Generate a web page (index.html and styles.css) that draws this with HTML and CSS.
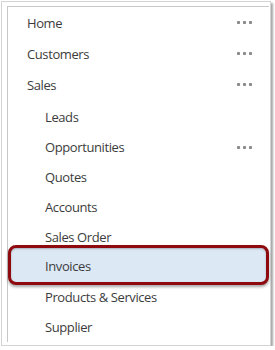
FILE: index.html
```html
<!DOCTYPE html>
<html lang="en">
<head>
    <meta charset="UTF-8">
    <meta name="viewport" content="width=device-width, initial-scale=1.0">
    <title>Site Map</title>
    <link rel="stylesheet" href="styles.css">
</head>
<body>
    <div class="frame">
        <nav class="nav">
            <div class="row">
                <span>Home</span>
                <svg class="more" width="15" height="3" viewBox="0 0 15 3"><rect x="0" y="0" width="3" height="3" rx="0.8"/><rect x="6" y="0" width="3" height="3" rx="0.8"/><rect x="12" y="0" width="3" height="3" rx="0.8"/></svg>
            </div>
            <div class="row">
                <span>Customers</span>
                <svg class="more" width="15" height="3" viewBox="0 0 15 3"><rect x="0" y="0" width="3" height="3" rx="0.8"/><rect x="6" y="0" width="3" height="3" rx="0.8"/><rect x="12" y="0" width="3" height="3" rx="0.8"/></svg>
            </div>
            <div class="row">
                <span>Sales</span>
                <svg class="more" width="15" height="3" viewBox="0 0 15 3"><rect x="0" y="0" width="3" height="3" rx="0.8"/><rect x="6" y="0" width="3" height="3" rx="0.8"/><rect x="12" y="0" width="3" height="3" rx="0.8"/></svg>
            </div>
            <div class="sub">
                <div class="row sub-row"><span>Leads</span></div>
                <div class="row sub-row">
                    <span>Opportunities</span>
                    <svg class="more" width="15" height="3" viewBox="0 0 15 3"><rect x="0" y="0" width="3" height="3" rx="0.8"/><rect x="6" y="0" width="3" height="3" rx="0.8"/><rect x="12" y="0" width="3" height="3" rx="0.8"/></svg>
                </div>
                <div class="row sub-row"><span>Quotes</span></div>
                <div class="row sub-row"><span>Accounts</span></div>
                <div class="row sub-row"><span>Sales Order</span></div>
                <div class="row sub-row selected"><span>Invoices</span></div>
                <div class="row sub-row"><span>Products &amp; Services</span></div>
                <div class="row sub-row"><span>Supplier</span></div>
            </div>
        </nav>
    </div>
</body>
</html>
```

FILE: styles.css
```css
body {
    margin: 0;
    padding: 1px 0 0 1px;
    background: #fff;
    font-family: "Open Sans", "Noto Sans", sans-serif;
    font-size: 13px;
    letter-spacing: -0.4px;
    color: #3c3c3c;
}

.frame {
    width: 263px;
    height: 339px;
    border: 1px solid #d4d4d4;
    box-shadow: 2px 2px 2px rgba(0, 0, 0, 0.35);
    padding: 4px 0 0 5px;
}

.nav {
    width: 261px;
    height: 335px;
    border-top: 1px solid #c8c8c8;
    border-left: 1px solid #c8c8c8;
}

.row {
    display: flex;
    align-items: center;
    justify-content: space-between;
    height: 31px;
    padding: 0 17px 0 19px;
}

.more {
    fill: #8a8a8a;
}

.sub {
    padding-top: 2px;
}

.sub-row {
    height: 30px;
    padding-left: 37px;
}

.selected {
    height: 40px;
    margin: -7px 0 -3px;
    padding-left: 34px;
    padding-top: 1px;
    box-sizing: border-box;
    border: 3px solid #8e0a0e;
    border-radius: 8px;
    background: #dde8f5;
    box-shadow: 0 2px 3px rgba(0, 0, 0, 0.35), inset 0 1px 2px rgba(0, 0, 0, 0.25);
}
```
